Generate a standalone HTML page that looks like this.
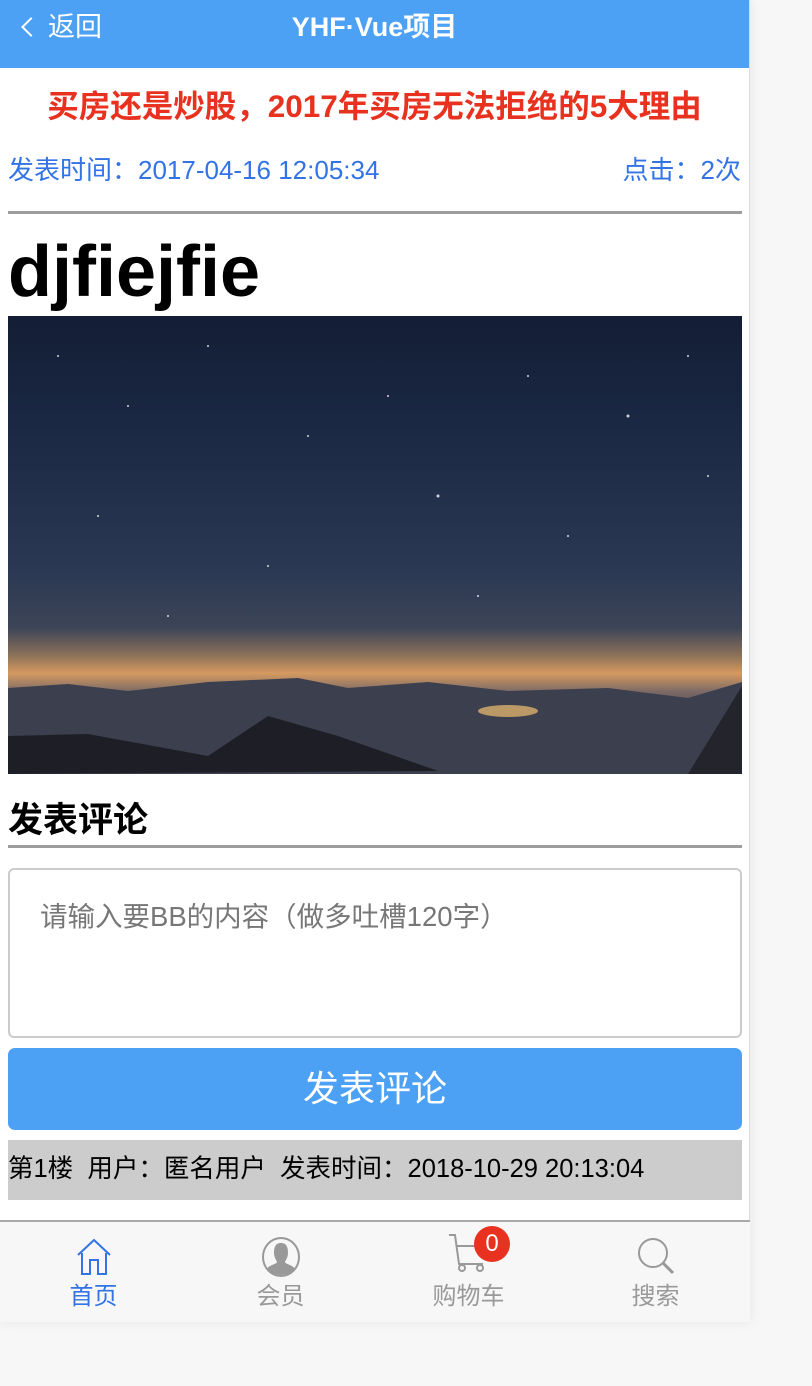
<!DOCTYPE html>
<html><head><meta charset="utf-8"><style>
*{margin:0;padding:0;box-sizing:border-box}
body{width:812px;height:1386px;background:#f7f7f7;font-family:"Liberation Sans","Noto Sans CJK SC",sans-serif;position:relative;overflow:hidden}
.app{position:absolute;left:0;top:0;width:750px;height:1322px;background:#fff;box-shadow:0 0 12px rgba(0,0,0,.08);border-right:1px solid #ddd;border-bottom:1px solid #d4d4d4}
.hd{height:68px;background:#4da1f5;color:#fff;position:relative}
.hd .back{position:absolute;left:24px;top:10px;font-size:27px;line-height:34px}
.hd .back b{display:inline-block;width:14px;height:14px;border-left:2.5px solid #fff;border-bottom:2.5px solid #fff;transform:rotate(45deg);margin-right:10px;vertical-align:2px}
.hd .t{position:absolute;left:0;right:0;text-align:center;top:10px;font-size:27px;line-height:34px;font-weight:bold}
h1{color:#e8311f;font-size:31.5px;text-align:center;margin-top:19px;line-height:38px;font-weight:bold;white-space:nowrap}
.meta{color:#3273e6;font-size:26px;display:flex;justify-content:space-between;padding:0 8px;margin-top:28px;line-height:34px}
.hr{position:absolute;left:8px;top:211px;width:734px;height:3px;background:#9d9d9d}
.big{position:absolute;left:8px;top:232px;font-size:72px;font-weight:bold;line-height:80px;letter-spacing:0}
.img{position:absolute;left:8px;top:316px;width:734px;height:458px;background:linear-gradient(180deg,#131d35 0%,#1d2b47 30%,#2a3853 55%,#3c4457 68%,#8a7058 74%,#d49a60 78%,#7c6a66 82%,#3a3c48 88%,#2a2c36 100%)}
.sec{position:absolute;left:8px;top:792px;font-size:35px;font-weight:bold}
.hr2{position:absolute;left:8px;top:845px;width:734px;height:3px;background:#9d9d9d}
.ta{position:absolute;left:8px;top:868px;width:734px;height:170px;border:2px solid #ccc;border-radius:6px;color:#777;font-size:27.5px;padding:24px 30px}
.btn{position:absolute;left:8px;top:1048px;width:734px;height:82px;background:#4da1f5;border-radius:7px;color:#fff;font-size:36px;text-align:center;line-height:82px}
.cm{position:absolute;left:8px;top:1140px;width:734px;height:60px;background:#ccc;font-size:25.5px;line-height:58px;white-space:nowrap}
.tab{position:absolute;left:0;top:1220px;width:750px;height:102px;background:#f7f7f7;border-top:2px solid #a9a9a9}
.it{position:absolute;top:0;width:187px;text-align:center;font-size:24px;color:#999}
.it span{position:absolute;top:54px;left:0;right:0}
.badge{position:absolute;left:474px;top:1226px;width:36px;height:36px;border-radius:18px;background:#e8311f;color:#fff;font-size:24px;text-align:center;line-height:36px}
</style></head><body>
<div class="app">
<div class="hd"><div class="back"><b></b>返回</div><div class="t">YHF·Vue项目</div></div>
<h1>买房还是炒股，2017年买房无法拒绝的5大理由</h1>
<div class="meta"><span>发表时间：2017-04-16 12:05:34</span><span>点击：2次</span></div>
<div class="hr"></div>
<div class="big">djfiejfie</div>
<div class="img"><svg width="734" height="458" viewBox="0 0 734 458">
<g fill="#fff" opacity=".8"><circle cx="50" cy="40" r="1"/><circle cx="120" cy="90" r="1"/><circle cx="200" cy="30" r="1"/><circle cx="300" cy="120" r="1"/><circle cx="430" cy="180" r="1.5"/><circle cx="520" cy="60" r="1"/><circle cx="620" cy="100" r="1.5"/><circle cx="680" cy="40" r="1"/><circle cx="90" cy="200" r="1"/><circle cx="260" cy="250" r="1"/><circle cx="380" cy="80" r="1"/><circle cx="560" cy="220" r="1"/><circle cx="700" cy="160" r="1"/><circle cx="160" cy="300" r="1"/><circle cx="470" cy="280" r="1"/></g>
<path d="M0 372 L60 368 L120 375 L200 366 L290 362 L340 372 L420 366 L500 375 L600 372 L680 382 L734 366 L734 458 L0 458Z" fill="#3c3f4d"/>
<path d="M0 420 L80 418 L200 440 L260 400 L330 420 L430 455 L0 458Z" fill="#1e1f26"/>
<path d="M680 458 L734 370 L734 458Z" fill="#24252c"/>
<ellipse cx="500" cy="395" rx="30" ry="6" fill="#f0c070" opacity=".7"/>
</svg></div>
<div class="sec">发表评论</div>
<div class="hr2"></div>
<div class="ta">请输入要BB的内容（做多吐槽120字）</div>
<div class="btn">发表评论</div>
<div class="cm">第1楼&nbsp; 用户：匿名用户&nbsp; 发表时间：2018-10-29 20:13:04</div>
<div class="tab">
<div class="it" style="left:0;color:#3273e6"><svg style="position:absolute;left:76px;top:16px" width="36" height="38" viewBox="0 0 36 38" fill="none" stroke="#3273e6" stroke-width="2"><path d="M2 17 L18 2 L34 17 M6 15 V36 H14 V22 H22 V36 H30 V15"/></svg><span>首页</span></div>
<div class="it" style="left:187px"><svg style="position:absolute;left:74px;top:14px" width="40" height="42" viewBox="0 0 40 42"><ellipse cx="20" cy="21" rx="18" ry="19" fill="none" stroke="#999" stroke-width="2"/><path d="M20 7c6 0 7 5 7 10s-3 8-3 9c0 2 8 3 10 7-3 4-8 6-14 6s-11-2-14-6c2-4 10-5 10-7 0-1-3-4-3-9s1-10 7-10z" fill="#999"/></svg><span>会员</span></div>
<div class="it" style="left:375px"><svg style="position:absolute;left:72px;top:10px" width="42" height="40" viewBox="0 0 42 40" fill="none" stroke="#999" stroke-width="2"><path d="M2 3 H8 L12 32 H36 M10 14 H34"/><circle cx="15" cy="36" r="3"/><circle cx="33" cy="36" r="3"/></svg><span>购物车</span></div>
<div class="it" style="left:562px"><svg style="position:absolute;left:74px;top:14px" width="40" height="40" viewBox="0 0 40 40" fill="none" stroke="#999" stroke-width="2"><circle cx="17" cy="17" r="14"/><path d="M27 27 L37 37" stroke-width="3"/></svg><span>搜索</span></div>
</div>
<div class="badge">0</div>
</div>
</body></html>
